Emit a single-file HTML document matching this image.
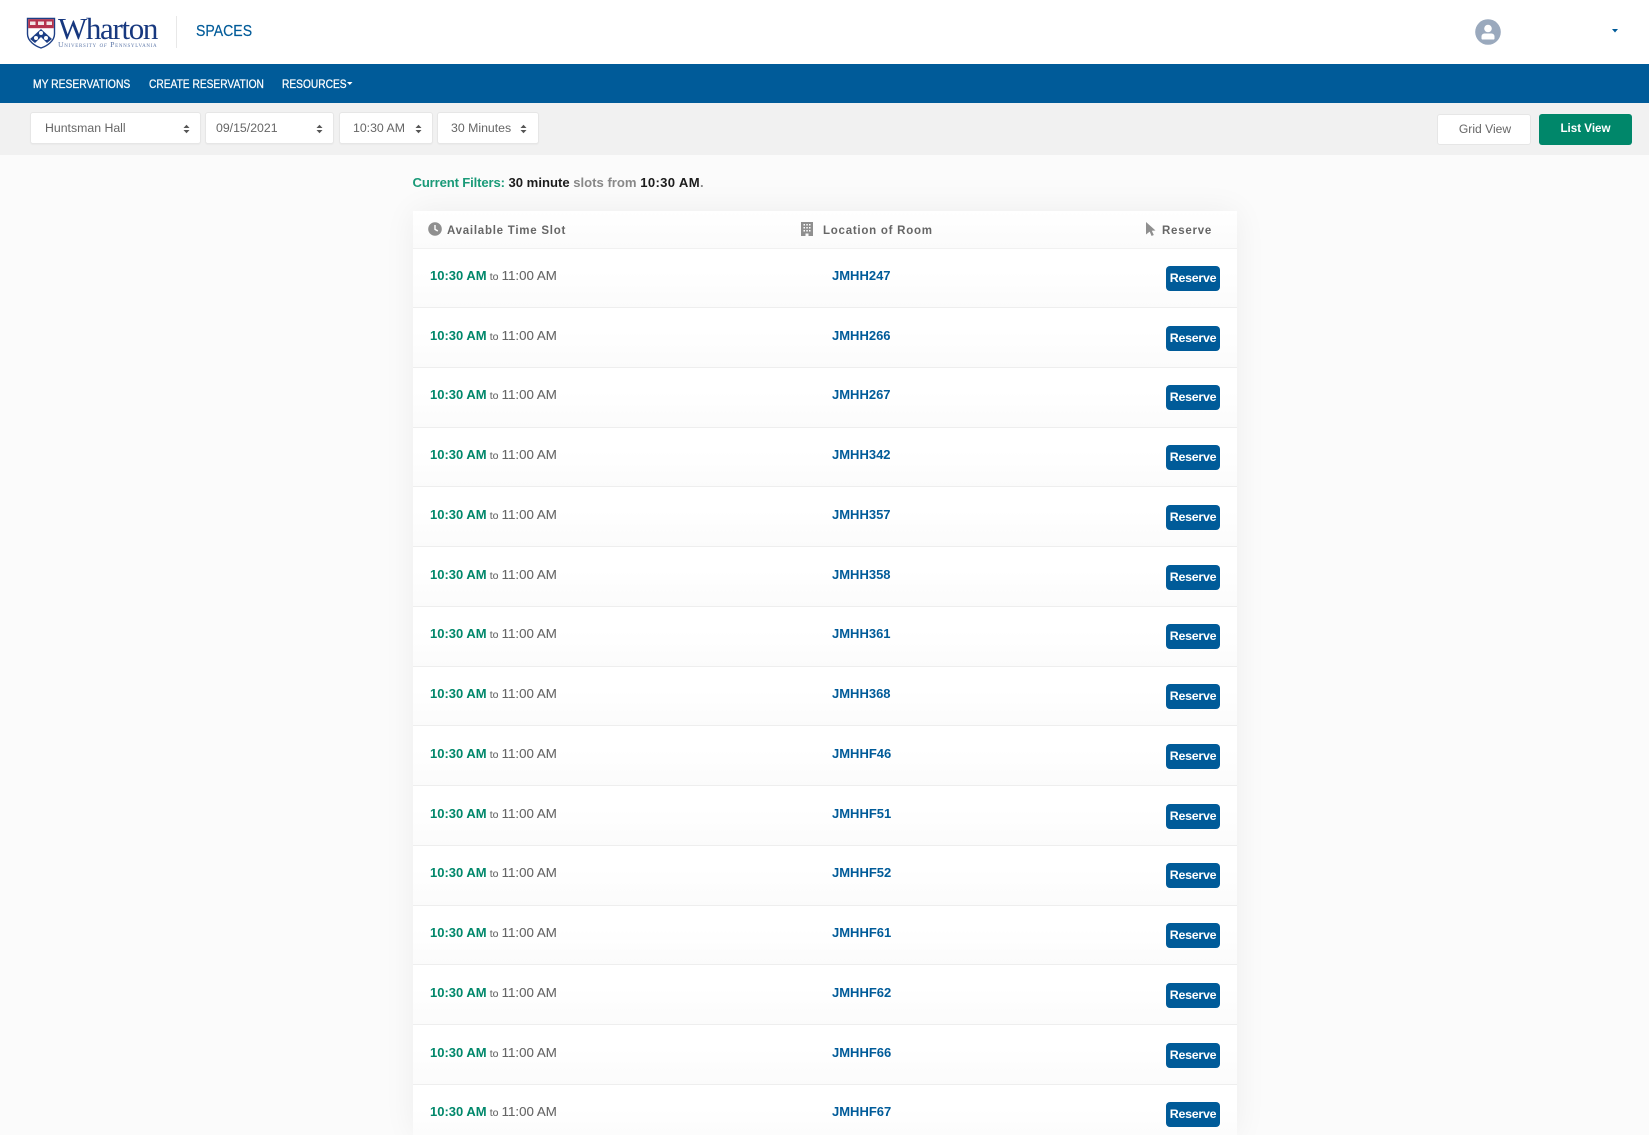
<!DOCTYPE html>
<html><head><meta charset="utf-8"><title>Spaces</title>
<style>
*{box-sizing:border-box}
html,body{margin:0;padding:0;width:1649px;height:1135px;overflow:hidden;background:#fbfbfb;font-family:"Liberation Sans",sans-serif}
#p{position:absolute;left:0;top:0;width:1649px;height:1135px;overflow:hidden;filter:blur(.35px)}
.a{position:absolute;white-space:nowrap}
.sel{position:absolute;top:112px;height:32px;background:#fff;border:1px solid #e6e6e6;border-radius:3px;box-shadow:0 1px 1px rgba(0,0,0,.03);font-size:12.3px;color:#666;line-height:30px}
.sel span{position:absolute;top:0}
.sel svg{position:absolute;top:11px}
.nav{position:absolute;top:76.5px;color:#fff;font-size:12px;line-height:14px;white-space:nowrap;transform-origin:0 50%;transform:scaleX(.85);-webkit-text-stroke:.25px #fff}
.th{position:absolute;top:223.5px;font-size:11.5px;font-weight:bold;color:#666;letter-spacing:.75px;line-height:15px;white-space:nowrap}
#table{position:absolute;left:413px;top:211px;width:824px;height:924px;background:#fff;box-shadow:0 0 30px rgba(0,0,0,.06)}
#clip{position:absolute;left:0;top:0;width:824px;height:924px;overflow:hidden}
#head{height:37.5px;background:linear-gradient(#fff,#fbfbfb);border-bottom:1px solid #f1f1f1}
.row{position:relative;height:59.74px;background:linear-gradient(#fff 40%,#fbfbfb);border-bottom:1px solid #eeeeee;font-size:13.3px;line-height:16px;color:#666}
.t{position:absolute;left:17px;top:19.5px;white-space:nowrap;-webkit-text-stroke:.1px #666}
.t b{color:#00876a;font-size:13px;-webkit-text-stroke:0}
.t small{font-size:10.5px;margin:0 -.6px}
.r{position:absolute;left:419px;top:19.5px;font-weight:bold;color:#005b99;font-size:13px}
.b{position:absolute;left:753px;top:17.5px;width:54px;height:25px;background:#005b99;border-radius:4px;color:#fff;font-size:12.4px;font-weight:bold;text-align:center;line-height:25px;letter-spacing:-.25px}
</style></head><body><div id="p">
<div class="a" style="left:0;top:0;width:1649px;height:64px;background:#fff"></div>
<svg class="a" style="left:26px;top:17px" width="30" height="32" viewBox="0 0 30 32">
<path d="M1.5 1.5H28.5V17C28.5 24 21 29 15 31C9 29 1.5 24 1.5 17Z" fill="#fff" stroke="#1d3f86" stroke-width="1.4"/>
<rect x="2.2" y="2.2" width="25.6" height="9" fill="#b5334d"/>
<rect x="4" y="4.5" width="5.5" height="3.5" fill="#f2e6e6"/><rect x="12" y="4.5" width="6" height="3.5" fill="#f2e6e6"/><rect x="20.5" y="4.5" width="5.5" height="3.5" fill="#f2e6e6"/>
<path d="M4 22L15 12L26 22L21 26L15 20L9 26Z" fill="#1d3f86"/>
<circle cx="15" cy="16" r="2" fill="#fff"/><circle cx="10" cy="21" r="2" fill="#fff"/><circle cx="20" cy="21" r="2" fill="#fff"/>
</svg>
<div class="a" style="left:58px;top:12px;font:31px/34px 'Liberation Serif',serif;color:#17387f;letter-spacing:-1.35px">Wharton</div>
<div class="a" style="left:58px;top:40.5px;font:small-caps 7.8px/8px 'Liberation Serif',serif;color:#5d77a8;letter-spacing:.68px">University <i>of</i> Pennsylvania</div>
<div class="a" style="left:176px;top:16px;width:1px;height:32px;background:#e8e8e8"></div>
<div class="a" style="left:196px;top:22px;font-size:16px;line-height:19px;color:#005b99;transform-origin:0 50%;transform:scaleX(.88);-webkit-text-stroke:.2px #005b99">SPACES</div>
<svg class="a" style="left:1475px;top:19px" width="26" height="26" viewBox="0 0 26 26"><circle cx="13" cy="13" r="12.8" fill="#9aa9bd"/><circle cx="13" cy="9.5" r="3.8" fill="#fff"/><path d="M6.5 19.5V17.5C6.5 15.3 8.3 14.5 10 14.5H16C17.7 14.5 19.5 15.3 19.5 17.5V19.5C19.5 20.2 19 20.5 18.5 20.5H7.5C7 20.5 6.5 20.2 6.5 19.5Z" fill="#fff"/></svg>
<svg class="a" style="left:1612px;top:29px" width="6" height="4"><path d="M0 0H6L3 3.5Z" fill="#005b99"/></svg>

<div class="a" style="left:0;top:64px;width:1649px;height:39px;background:#005b99"></div>
<div class="nav" style="left:33px;transform:scaleX(.86)">MY RESERVATIONS</div>
<div class="nav" style="left:149px">CREATE RESERVATION</div>
<div class="nav" style="left:282px">RESOURCES</div>
<svg class="a" style="left:347px;top:82px" width="6" height="4"><path d="M0 0H5.5L2.75 3Z" fill="#fff"/></svg>

<div class="a" style="left:0;top:103px;width:1649px;height:52px;background:#f1f1f1"></div>
<div class="sel" style="left:30px;width:171px"><span style="left:14px">Huntsman Hall</span><svg style="left:152px" width="7" height="10"><path d="M.5 4L3.5 .8L6.5 4ZM.5 6L3.5 9.2L6.5 6Z" fill="#555"/></svg></div>
<div class="sel" style="left:205px;width:129px"><span style="left:10px">09/15/2021</span><svg style="left:110px" width="7" height="10"><path d="M.5 4L3.5 .8L6.5 4ZM.5 6L3.5 9.2L6.5 6Z" fill="#555"/></svg></div>
<div class="sel" style="left:339px;width:94px"><span style="left:13px">10:30 AM</span><svg style="left:75px" width="7" height="10"><path d="M.5 4L3.5 .8L6.5 4ZM.5 6L3.5 9.2L6.5 6Z" fill="#555"/></svg></div>
<div class="sel" style="left:437px;width:102px"><span style="left:13px">30 Minutes</span><svg style="left:82px" width="7" height="10"><path d="M.5 4L3.5 .8L6.5 4ZM.5 6L3.5 9.2L6.5 6Z" fill="#555"/></svg></div>

<div class="a" style="left:1437px;top:114px;width:94px;height:31px;background:#fff;border:1px solid #e6e6e6;border-radius:3px;text-align:center;font-size:12.1px;line-height:29px;color:#666;padding-left:2px">Grid View</div>
<div class="a" style="left:1539px;top:114px;width:93px;height:31px;background:#00876a;border-radius:3px;text-align:center;font-size:11.6px;font-weight:bold;line-height:29px;color:#fff">List View</div>

<div class="a" style="left:412.5px;top:174.5px;font-size:13.1px;line-height:16px;font-weight:bold;color:#888"><span style="color:#1a9a78;letter-spacing:-.14px">Current Filters:</span> <span style="color:#1c1c1c">30 minute</span> slots from <span style="color:#1c1c1c;letter-spacing:.35px">10:30 AM</span>.</div>

<div id="table"><div id="clip">
<div id="head"></div>
<div class="row"><div class="t"><b>10:30 AM</b> <small>to</small> 11:00 AM</div><div class="r">JMHH247</div><div class="b">Reserve</div></div>
<div class="row"><div class="t"><b>10:30 AM</b> <small>to</small> 11:00 AM</div><div class="r">JMHH266</div><div class="b">Reserve</div></div>
<div class="row"><div class="t"><b>10:30 AM</b> <small>to</small> 11:00 AM</div><div class="r">JMHH267</div><div class="b">Reserve</div></div>
<div class="row"><div class="t"><b>10:30 AM</b> <small>to</small> 11:00 AM</div><div class="r">JMHH342</div><div class="b">Reserve</div></div>
<div class="row"><div class="t"><b>10:30 AM</b> <small>to</small> 11:00 AM</div><div class="r">JMHH357</div><div class="b">Reserve</div></div>
<div class="row"><div class="t"><b>10:30 AM</b> <small>to</small> 11:00 AM</div><div class="r">JMHH358</div><div class="b">Reserve</div></div>
<div class="row"><div class="t"><b>10:30 AM</b> <small>to</small> 11:00 AM</div><div class="r">JMHH361</div><div class="b">Reserve</div></div>
<div class="row"><div class="t"><b>10:30 AM</b> <small>to</small> 11:00 AM</div><div class="r">JMHH368</div><div class="b">Reserve</div></div>
<div class="row"><div class="t"><b>10:30 AM</b> <small>to</small> 11:00 AM</div><div class="r">JMHHF46</div><div class="b">Reserve</div></div>
<div class="row"><div class="t"><b>10:30 AM</b> <small>to</small> 11:00 AM</div><div class="r">JMHHF51</div><div class="b">Reserve</div></div>
<div class="row"><div class="t"><b>10:30 AM</b> <small>to</small> 11:00 AM</div><div class="r">JMHHF52</div><div class="b">Reserve</div></div>
<div class="row"><div class="t"><b>10:30 AM</b> <small>to</small> 11:00 AM</div><div class="r">JMHHF61</div><div class="b">Reserve</div></div>
<div class="row"><div class="t"><b>10:30 AM</b> <small>to</small> 11:00 AM</div><div class="r">JMHHF62</div><div class="b">Reserve</div></div>
<div class="row"><div class="t"><b>10:30 AM</b> <small>to</small> 11:00 AM</div><div class="r">JMHHF66</div><div class="b">Reserve</div></div>
<div class="row"><div class="t"><b>10:30 AM</b> <small>to</small> 11:00 AM</div><div class="r">JMHHF67</div><div class="b">Reserve</div></div>
</div></div>

<svg class="a" style="left:428px;top:222px" width="14" height="14" viewBox="0 0 14 14"><circle cx="7" cy="7" r="6.8" fill="#8f8f8f"/><path d="M7 3V7.3L9.8 9" fill="none" stroke="#fff" stroke-width="1.4"/></svg>
<div class="th" style="left:447px">Available Time Slot</div>
<svg class="a" style="left:801px;top:222px" width="12" height="14" viewBox="0 0 12 14"><path d="M0 0H12V14H7.5V11.5H4.5V14H0Z" fill="#8f8f8f"/><path d="M2.5 2H4V3.5H2.5ZM5.3 2H6.8V3.5H5.3ZM8 2H9.5V3.5H8ZM2.5 5H4V6.5H2.5ZM5.3 5H6.8V6.5H5.3ZM8 5H9.5V6.5H8ZM2.5 8H4V9.5H2.5ZM5.3 8H6.8V9.5H5.3ZM8 8H9.5V9.5H8Z" fill="#fff"/></svg>
<div class="th" style="left:823px">Location of Room</div>
<svg class="a" style="left:1146px;top:222px" width="10" height="14" viewBox="0 0 10 14"><path d="M0 0L9.5 8.5L5.8 8.8L7.8 13L5.6 14L3.7 9.6L0 12.5Z" fill="#8f8f8f"/></svg>
<div class="th" style="left:1162px">Reserve</div>
</div></body></html>
